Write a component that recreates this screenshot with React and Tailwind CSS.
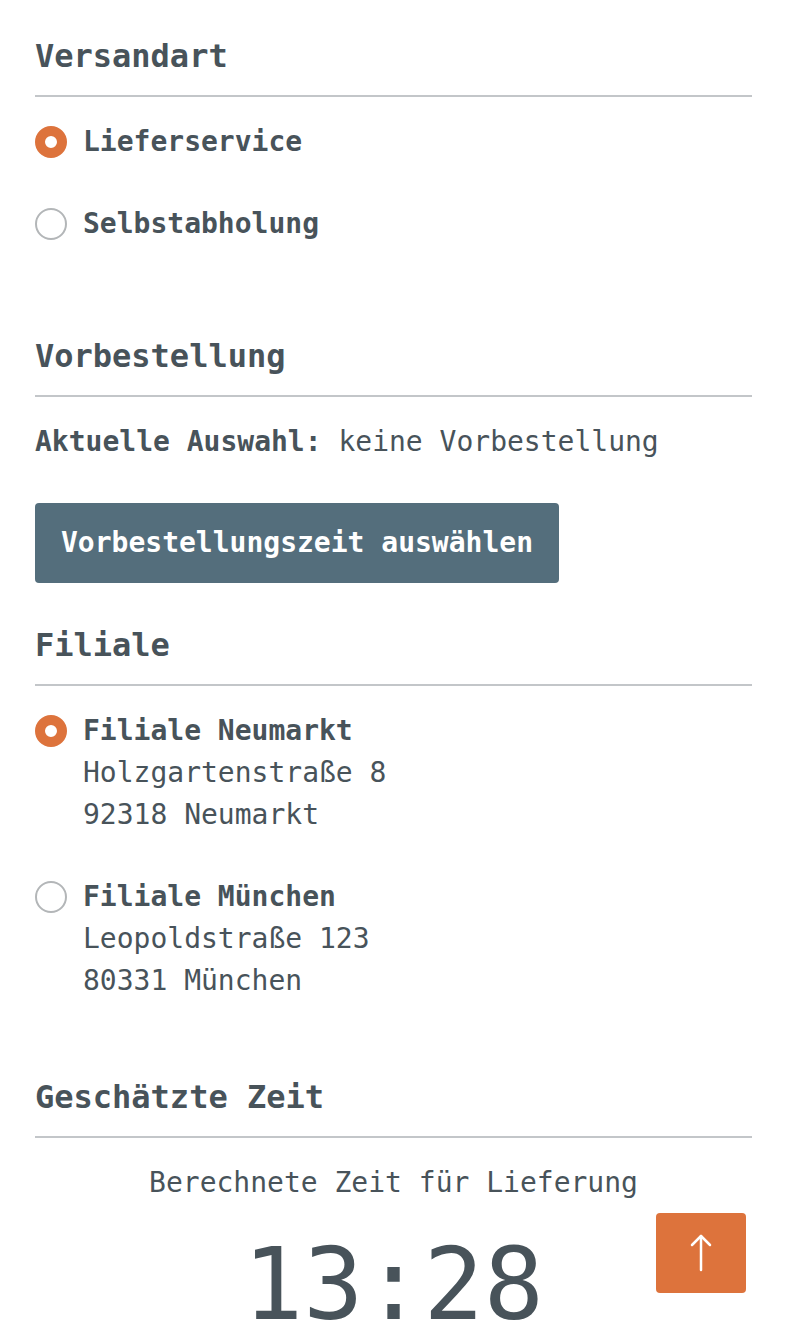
const SECTIONS_FONT = "font-['DejaVu_Sans_Mono','Liberation_Mono',monospace]"

function Heading({ children, className = '' }) {
  return (
    <h2 className={`text-[32px] leading-[40px] font-bold pb-[19px] border-b-2 border-[#c3c6c9] ${className}`}>
      {children}
    </h2>
  )
}

function Radio({ checked }) {
  return checked ? (
    <span className="w-[32px] h-[32px] rounded-full border-[10px] border-[#dd733c] bg-white shrink-0" />
  ) : (
    <span className="w-[32px] h-[32px] rounded-full border-2 border-[#b3b6b8] bg-white shrink-0" />
  )
}

const STORES = [
  { name: 'Filiale Neumarkt', street: 'Holzgartenstraße 8', city: '92318 Neumarkt', checked: true },
  { name: 'Filiale München', street: 'Leopoldstraße 123', city: '80331 München', checked: false },
]

export default function App() {
  return (
    <div className={`min-h-screen bg-white text-[#48535a] pl-[35px] pr-[38px] ${SECTIONS_FONT}`}>
      {/* Versandart */}
      <Heading className="pt-[36px]">Versandart</Heading>
      <div className="mt-[25px] flex flex-col gap-[42px]">
        <label className="flex items-center gap-[16px] h-[40px] text-[28px] font-bold">
          <Radio checked />
          Lieferservice
        </label>
        <label className="flex items-center gap-[16px] h-[40px] text-[28px] font-bold">
          <Radio />
          Selbstabholung
        </label>
      </div>

      {/* Vorbestellung */}
      <Heading className="mt-[92px]">Vorbestellung</Heading>
      <p className="mt-[25px] text-[28px] leading-[40px]">
        <span className="font-bold">Aktuelle Auswahl:</span> keine Vorbestellung
      </p>
      <button className="mt-[41px] h-[80px] px-[26px] rounded-[4px] bg-[#546e7c] text-white text-[28px] font-bold">
        Vorbestellungszeit auswählen
      </button>

      {/* Filiale */}
      <Heading className="mt-[42px]">Filiale</Heading>
      <div className="mt-[24px] flex flex-col gap-[40px]">
        {STORES.map(s => (
          <div key={s.name} className="flex gap-[16px] text-[28px] leading-[42px]">
            <div className="h-[42px] flex items-center">
              <Radio checked={s.checked} />
            </div>
            <div>
              <div className="font-bold">{s.name}</div>
              <div>{s.street}</div>
              <div>{s.city}</div>
            </div>
          </div>
        ))}
      </div>

      {/* Geschätzte Zeit */}
      <Heading className="mt-[75px]">Geschätzte Zeit</Heading>
      <p className="mt-[25px] text-center text-[28px] leading-[40px]">Berechnete Zeit für Lieferung</p>
      <p className="mt-[32px] text-center text-[100px] leading-[100px] pb-[20px]">13:28</p>

      {/* scroll to top */}
      <button className="fixed right-[44px] bottom-[45px] w-[90px] h-[80px] rounded-[4px] bg-[#dd733c] flex items-center justify-center">
        <svg width="24" height="38" viewBox="0 0 24 38" fill="none" stroke="white" strokeWidth="2.5" strokeLinecap="round" strokeLinejoin="round">
          <path d="M12 2 V36" />
          <path d="M3 11 L12 2 L21 11" />
        </svg>
      </button>
    </div>
  )
}
